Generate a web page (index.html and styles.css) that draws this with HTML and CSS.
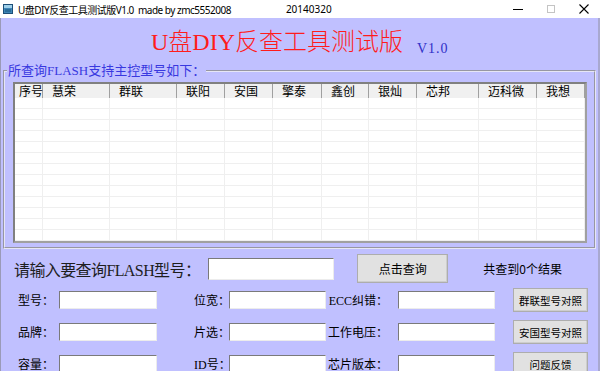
FILE: index.html
```html
<!DOCTYPE html>
<html lang="zh-CN">
<head>
    <meta charset="UTF-8">
    <title>U盘DIY反查工具测试版V1.0</title>
    <link rel="stylesheet" href="styles.css">
</head>
<body>
<div class="titlebar">
    <svg class="app-icon" width="10" height="10" viewBox="0 0 10 10">
        <rect x="0.5" y="0.5" width="9" height="9" fill="#3f86b8" stroke="#1d4f78"/>
        <rect x="1" y="1" width="8" height="3" fill="#9fd0ea"/>
        <rect x="2" y="5" width="6" height="3" fill="#2a6c9a"/>
    </svg>
    <span class="caption">U盘DIY反查工具测试版V1.0&nbsp; made by zmc5552008</span>
    <span class="date">20140320</span>
    <div class="controls">
        <span class="ctl"><svg width="10" height="10" viewBox="0 0 10 10"><line x1="0" y1="5.5" x2="10" y2="5.5" stroke="#000"/></svg></span>
        <span class="ctl"><svg width="10" height="10" viewBox="0 0 10 10"><rect x="1.5" y="1.5" width="7" height="7" fill="none" stroke="#c4c4c4"/></svg></span>
        <span class="ctl"><svg width="10" height="10" viewBox="0 0 10 10"><path d="M0.5 0.5 L9.5 9.5 M9.5 0.5 L0.5 9.5" stroke="#000" stroke-width="1.1"/></svg></span>
    </div>
</div>
<div class="window">
    <div class="header">
        <h1 class="title">U盘DIY反查工具测试版</h1><span class="ver">V1.0</span>
    </div>
    <fieldset class="group">
        <legend>所查询FLASH支持主控型号如下：</legend>
        <div class="list">
            <div class="list-head">
                <div>序号</div><div>慧荣</div><div>群联</div><div>联阳</div><div>安国</div><div>擎泰</div>
                <div>鑫创</div><div>银灿</div><div>芯邦</div><div>迈科微</div><div>我想</div>
            </div>
            <div class="list-body">
                <div></div><div></div><div></div><div></div><div></div><div></div>
                <div></div><div></div><div></div><div></div><div></div>
            </div>
        </div>
    </fieldset>
    <div class="search">
        <span class="ask">请输入要查询FLASH型号：</span>
        <input class="box big" type="text">
        <button class="btn query">点击查询</button>
        <span class="result">共查到0个结果</span>
    </div>
    <div class="info">
        <span class="lbl">型号：</span><input class="box" type="text">
        <span class="lbl mid">位宽：</span><input class="box" type="text">
        <span class="lbl right">ECC纠错：</span><input class="box" type="text">
        <button class="btn side">群联型号对照</button>

        <span class="lbl">品牌：</span><input class="box" type="text">
        <span class="lbl mid">片选：</span><input class="box" type="text">
        <span class="lbl right">工作电压：</span><input class="box" type="text">
        <button class="btn side">安国型号对照</button>

        <span class="lbl">容量：</span><input class="box" type="text">
        <span class="lbl mid">ID号：</span><input class="box" type="text">
        <span class="lbl right">芯片版本：</span><input class="box" type="text">
        <button class="btn side">问题反馈</button>
    </div>
</div>
</body>
</html>
```
FILE: styles.css
```css
body{margin: 0;padding: 0;width: 600px;height: 371px;overflow: hidden;
    font-family: "Liberation Serif", "Noto Sans CJK SC", serif;
    font-size: 12px;
    background-color: #fff;
}

/* title bar */
.titlebar{
    display: flex;
    align-items: center;
    height: 18px;
    background-color: #fff;
    font-family: "Noto Sans", "Noto Sans CJK SC", sans-serif;
    font-size: 10px;
    color: #000;
}
.app-icon{margin: 0 5px 0 3px;flex: none}
.caption{white-space: nowrap;letter-spacing: -0.5px}
.date{margin-left: 55px}
.controls{margin-left: auto;display: flex}
.ctl{width: 33px;height: 18px;display: flex;align-items: center;justify-content: center}

/* window body */
.window{
    height: 353px;
    overflow: hidden;
    background-color: #c0c0ff;
    border-left: 1px solid #9a9ab8;
    border-right: 2px solid #a8a8d0;
}
.header{
    height: 34px;
    padding: 12px 0 0 150px;
    white-space: nowrap;
}
.title{
    display: inline;
    margin: 0;
    font-size: 24px;
    line-height: 24px;
    font-weight: 300;
    color: #ff1c1c;
}
.ver{
    margin-left: 14px;
    font-size: 14px;
    letter-spacing: 1px;
    color: #2f2fc8;
    vertical-align: -3px;
}

/* group box */
.group{
    margin: 0 2px;
    padding: 4px 7px 4px 8px;
    border: 2px groove #e6e6f6;
    min-width: 0;
}
.group legend{
    margin-left: -6px;
    padding: 0 1px;
    font-size: 13px;
    line-height: 14px;
    color: #3838e0;
}
.list{
    border: 2px solid;
    border-color: #808080 #a0a0a0 #a0a0a0 #808080;
    background-color: #fff;
}
.list-head, .list-body{
    display: grid;
    grid-template-columns: 28px 67px 67px 48px 48px 49px 47px 48px 62px 58px 48px;
}
.list-head{
    height: 14px;
    line-height: 14px;
    background-color: #f0f0f0;
    font-family: "Noto Sans CJK SC", sans-serif;
    font-size: 12px;
}
.list-head div{
    padding-left: 9px;
    border-right: 1px solid #a0a0a0;
    white-space: nowrap;
}
.list-head div:first-child{padding-left: 4px}
.list-body{
    height: 143px;
    background: repeating-linear-gradient(to bottom, transparent 0, transparent 10px, #efefef 10px, #efefef 11px);
}
.list-body div{border-right: 1px solid #efefef}

/* inputs & buttons */
.box{
    box-sizing: border-box;
    width: 98px;
    height: 18px;
    margin: 0;
    padding: 0 2px;
    border: 1px solid;
    border-color: #7a7a7a #ececec #ececec #7a7a7a;
    background-color: #fff;
}
.btn{
    box-sizing: border-box;
    margin: 0;
    padding: 0;
    border: 1px solid #adadad;
    box-shadow: inset -1px -1px #cdcdcd;
    background-color: #e1e1e1;
    font-family: "Noto Sans CJK SC", sans-serif;
    font-size: 12px;
    color: #000;
}

/* search row */
.search{
    box-sizing: border-box;
    display: flex;
    align-items: center;
    height: 35px;
    padding: 4px 0 0 13px;
}
.ask{font-size: 16px;letter-spacing: -0.6px;color: #1e1e1e;white-space: nowrap}
.box.big{width: 126px;height: 22px;margin-left: 8px}
.btn.query{width: 91px;height: 29px;margin-left: 23px}
.result{margin-left: 35px;font-family: "Noto Sans CJK SC", sans-serif;font-size: 12px}

/* detail rows */
.info{
    display: grid;
    grid-template-columns: 41px 98px 37px 35px 97px 72px 97px 18px 75px;
    grid-auto-rows: 32px;
    align-items: center;
    padding-left: 17px;
}
.info .box{width: 100%}
.lbl{font-size: 12px;white-space: nowrap}
.info .mid{grid-column: 4}
.info .right{grid-column: 6;text-align: right;padding-right: 10px}
.info .side{grid-column: 9;height: 24px;font-size: 10.5px}
```
